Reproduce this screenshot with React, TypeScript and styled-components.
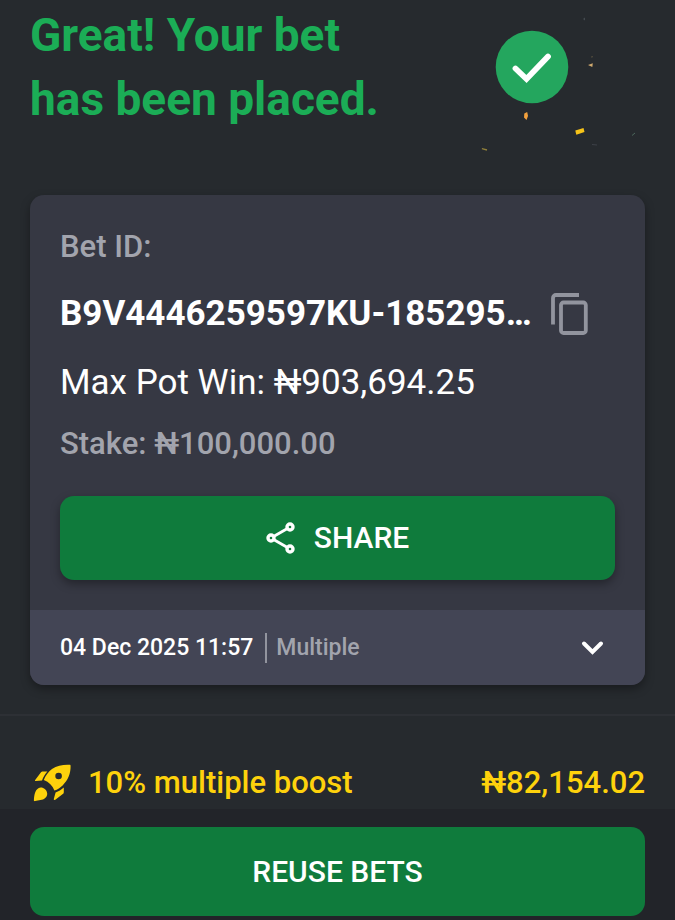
import React from "react";
import styled, { createGlobalStyle } from "styled-components";

const GlobalStyle = createGlobalStyle`
  * { box-sizing: border-box; }
  body {
    margin: 0;
    background: #262a2e;
    font-family: Roboto, sans-serif;
    color: #ffffff;
  }
  button { font-family: inherit; border: 0; cursor: pointer; }
  h1, p { margin: 0; }
  svg { display: block; flex: none; }
`;

const Page = styled.main`
  display: flex;
  flex-direction: column;
  min-height: 100vh;
`;

const Hero = styled.header`
  display: flex;
  justify-content: space-between;
  align-items: flex-start;
  padding: 3px 30px 36px;
`;

const Title = styled.h1`
  max-width: 380px;
  font-size: 46px;
  font-weight: 700;
  line-height: 64px;
  color: #1bad56;
`;

const Card = styled.section`
  margin: 0 30px;
  border-radius: 14px;
  background: #363843;
  box-shadow: 0 4px 10px rgba(0, 0, 0, 0.35);
  overflow: hidden;
`;

const CardBody = styled.div`
  padding: 30px;
`;

const Label = styled.p`
  font-size: 31px;
  font-weight: 500;
  line-height: 44px;
  color: #a2a4ad;
`;

const IdRow = styled.div`
  display: flex;
  align-items: center;
  justify-content: space-between;
  padding: 15px 27px 15px 0;
`;

const BetId = styled.p`
  font-size: 35px;
  font-weight: 700;
  line-height: 60px;
  white-space: nowrap;
`;

const CopyButton = styled.button`
  display: flex;
  padding: 0;
  background: none;
  color: #92949e;
`;

const Win = styled.p`
  padding-bottom: 15px;
  font-size: 35px;
  line-height: 48px;
`;

const ActionButton = styled.button<{ $height: number; $raised?: boolean }>`
  display: flex;
  align-items: center;
  justify-content: center;
  gap: 18px;
  width: 100%;
  height: ${({ $height }) => $height}px;
  border-radius: 14px;
  background: #0f7b3c;
  color: #ffffff;
  font-size: 30px;
  font-weight: 500;
  line-height: 40px;
  box-shadow: ${({ $raised }) => ($raised ? "0 4px 10px rgba(0, 0, 0, 0.35)" : "none")};
`;

const ShareArea = styled.div`
  padding-top: 30px;
`;

const Summary = styled.button`
  display: flex;
  align-items: center;
  width: 100%;
  height: 75px;
  padding: 0 40px 0 30px;
  background: #434555;
  color: #ffffff;
  font-size: 23px;
  font-weight: 500;
  line-height: 30px;
  text-align: left;
`;

const BetKind = styled.span`
  flex: 1;
  margin-left: 12px;
  padding-left: 9px;
  border-left: 2px solid #92949e;
  color: #a2a4ad;
`;

const Boost = styled.section`
  display: flex;
  align-items: center;
  gap: 16px;
  margin-top: 29px;
  padding: 46px 30px 5px;
  border-top: 2px solid #2d3035;
  color: #fed20c;
  font-size: 31px;
  font-weight: 500;
  line-height: 40px;
`;

const BoostName = styled.span`
  flex: 1;
`;

const BottomBar = styled.footer`
  padding: 18px 30px 4px;
  background: #222429;
`;

function Celebration() {
  return (
    <svg width="170" height="156" viewBox="475 3 170 156" role="img" aria-label="Success">
      <circle cx="532" cy="67" r="36.3" fill="#24a65e" />
      <path d="M515.5 68.5 526.5 79 548 56.5" fill="none" stroke="#fff" strokeWidth="5.8" strokeLinecap="round" strokeLinejoin="miter" />
      <path d="M524.3 113.5 527.2 112 528 116 526.5 120 524 117.5Z" fill="#f3a13d" />
      <path d="M575.3 130.6 583.5 128 584.5 132 576.3 134.8Z" fill="#f6c319" />
      <path d="M482 148 487.2 149.2 486.8 150.7 481.8 149.3Z" fill="#91803a" />
      <path d="M588 65 592.8 63.3 592.3 67Z" fill="#d0aa6f" />
      <path d="M591 57 593 56.7" stroke="#59513f" />
      <path d="M632 135.5 635 133" stroke="#4c675c" />
      <path d="M592 144.5 597 145" stroke="#3d4148" />
      <path d="M583 19 585 17.5 585 20.5Z" fill="#454c51" />
    </svg>
  );
}

function CopyIcon() {
  return (
    <svg width="37" height="42" viewBox="0 0 37 42" fill="none" stroke="currentColor" strokeWidth="3.8" aria-hidden="true">
      <path d="M2 31.5V5a3 3 0 0 1 3-3H28" />
      <rect x="10" y="9.5" width="24.8" height="30.5" rx="2.5" />
    </svg>
  );
}

function ShareIcon() {
  return (
    <svg width="30" height="32" viewBox="0 0 30 32" fill="none" stroke="currentColor" strokeWidth="3.4" aria-hidden="true">
      <path d="M8 14.3 21 6.7M8 17.7 21 25.3" strokeWidth="2.8" />
      <circle cx="5" cy="16" r="3" />
      <circle cx="24" cy="5" r="3" />
      <circle cx="24" cy="27" r="3" />
    </svg>
  );
}

function ChevronIcon() {
  return (
    <svg width="25" height="24" viewBox="0 0 25 24" fill="none" stroke="currentColor" strokeWidth="4" strokeLinecap="round" aria-hidden="true">
      <path d="M4 7.5 12.5 16 21 7.5" />
    </svg>
  );
}

function RocketIcon() {
  return (
    <svg width="42" height="42" viewBox="0 0 42 42" fill="currentColor" aria-hidden="true">
      <path
        fillRule="evenodd"
        d="M40.6 3.8C40.8 11.5 38 18.3 32.6 23.4 30.3 25.5 27.6 27.3 24.4 28.6 22.5 23.6 19 20 13.8 18 15.6 13.7 18.2 9.8 22 7 27 3.6 33 2.4 39.6 2.7 40.3 2.7 40.6 3.1 40.6 3.8ZM28.6 10.7A3.3 3.3 0 1 0 28.6 17.3 3.3 3.3 0 0 0 28.6 10.7Z"
      />
      <path d="M10.8 10.6C11.4 9.8 12 9.6 13 9.6H17.4C15 12.3 13.2 15.2 12 18.6L5.8 19.1C4.9 19.1 4.7 18.6 5.2 17.9Z" />
      <path d="M25.6 30.6C28.6 29.4 31.3 27.8 33.8 25.6V30C33.8 31 33.5 31.5 32.8 32.1L25.3 37.7C24.3 38.4 23.7 38.1 23.8 37Z" />
      <path d="M8.4 26.2C11.8 24.2 16.9 27.2 17.2 31.4 17.3 34.8 15 36.9 11.8 37.7L5 39.1C4.1 39.3 3.8 38.9 3.9 38.1 4.3 33.4 4.8 28.3 8.4 26.2Z" />
    </svg>
  );
}

export default function App() {
  return (
    <>
      <GlobalStyle />
      <Page>
        <Hero>
          <Title>Great! Your bet has been placed.</Title>
          <Celebration />
        </Hero>
        <Card>
          <CardBody>
            <Label>Bet ID:</Label>
            <IdRow>
              <BetId>B9V4446259597KU-185295…</BetId>
              <CopyButton type="button" aria-label="Copy bet ID">
                <CopyIcon />
              </CopyButton>
            </IdRow>
            <Win>Max Pot Win: ₦903,694.25</Win>
            <Label>Stake: ₦100,000.00</Label>
            <ShareArea>
              <ActionButton type="button" $height={84} $raised>
                <ShareIcon />
                SHARE
              </ActionButton>
            </ShareArea>
          </CardBody>
          <Summary type="button" aria-expanded="false">
            <time dateTime="2025-12-04T11:57">04 Dec 2025 11:57</time>
            <BetKind>Multiple</BetKind>
            <ChevronIcon />
          </Summary>
        </Card>
        <Boost>
          <RocketIcon />
          <BoostName>10% multiple boost</BoostName>
          <span>₦82,154.02</span>
        </Boost>
        <BottomBar>
          <ActionButton type="button" $height={89}>
            REUSE BETS
          </ActionButton>
        </BottomBar>
      </Page>
    </>
  );
}
